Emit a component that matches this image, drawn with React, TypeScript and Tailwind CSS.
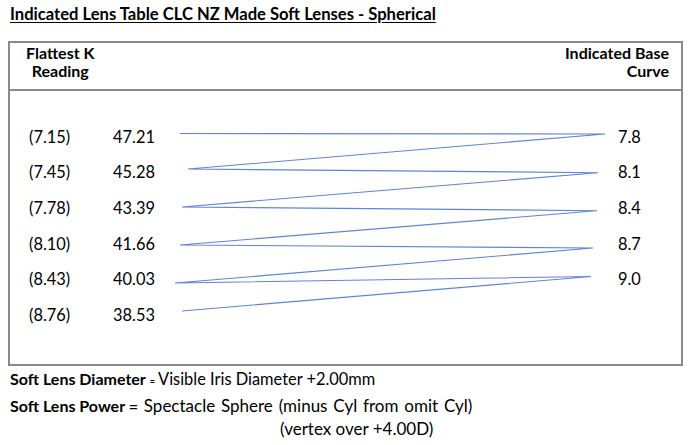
import React from "react";

const rows = [
  { k: "(7.15)", d: "47.21", bc: "7.8" },
  { k: "(7.45)", d: "45.28", bc: "8.1" },
  { k: "(7.78)", d: "43.39", bc: "8.4" },
  { k: "(8.10)", d: "41.66", bc: "8.7" },
  { k: "(8.43)", d: "40.03", bc: "9.0" },
  { k: "(8.76)", d: "38.53", bc: "" },
];

const pts =
  "180,133.5 605,134 188,169 598,172.7 182,207 597,210.7 180,245 593,248 175,283 591,276.5 182,311";

export default function App() {
  return (
    <div className="relative w-[700px] h-[445px] bg-white overflow-hidden text-black font-['Lato',sans-serif]">
      <div className="pl-[10px] pt-[5px] text-[16.6px] leading-[18px] font-bold underline underline-offset-[2px]">
        Indicated Lens Table CLC NZ Made Soft Lenses - Spherical
      </div>

      <div className="ml-[8px] mt-[18px] w-[675px] h-[325px] border-2 border-[#8a8a8a] flex flex-col">
        <div className="h-[48px] border-b-2 border-[#8a8a8a] flex justify-between pt-[1px] pl-[16px] pr-[12px] text-[16px] leading-[18px] font-bold">
          <div className="text-center">
            <div>Flattest K</div>
            <div>Reading</div>
          </div>
          <div className="text-right">
            <div>Indicated Base</div>
            <div>Curve</div>
          </div>
        </div>
        <div className="flex-1 pt-[28px] text-[16.4px]">
          {rows.map((r) => (
            <div key={r.k} className="h-[35.7px] flex items-center pl-[19px]">
              <div className="w-[84px]">{r.k}</div>
              <div>{r.d}</div>
              <div className="ml-auto w-[63px]">{r.bc}</div>
            </div>
          ))}
        </div>
      </div>

      <div className="pl-[10px] pt-[1px] text-[17px] leading-[23.5px]">
        <div>
          <span className="font-bold text-[16px]">Soft Lens Diameter</span>
          <span className="text-[9px] font-bold ml-[4px] mr-[3px]">=</span>
          <span className="text-[16.4px]">Visible Iris Diameter +2.00mm</span>
        </div>
        <div className="[word-spacing:1.5px]">
          <span className="font-bold text-[16px] [word-spacing:0px]">Soft Lens Power =</span> Spectacle Sphere (minus Cyl from omit Cyl)
        </div>
        <div className="pl-[270px]">(vertex over +4.00D)</div>
      </div>

      <svg
        className="absolute inset-0 pointer-events-none"
        width="700"
        height="445"
        viewBox="0 0 700 445"
      >
        <polyline
          points={pts}
          fill="none"
          stroke="#6284d6"
          strokeWidth="1.1"
          strokeLinejoin="miter"
          strokeMiterlimit="20"
        />
      </svg>
    </div>
  );
}
